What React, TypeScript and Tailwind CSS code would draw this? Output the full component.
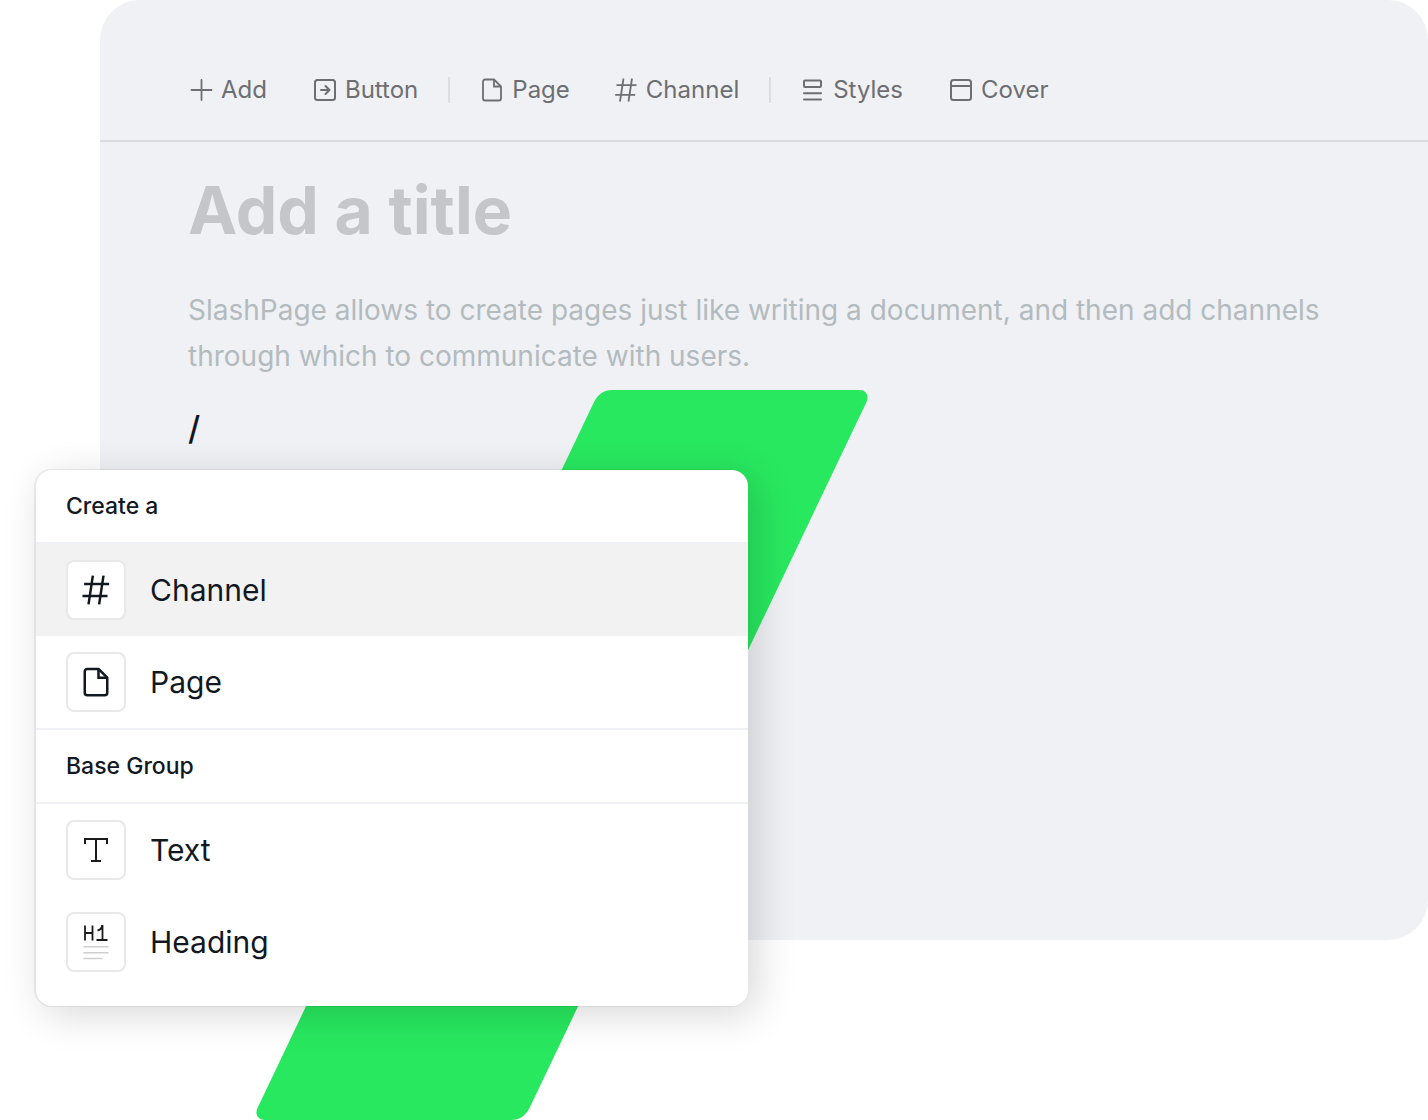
import type { ReactNode } from "react";

function PlusIcon() {
  return (
    <svg width="24" height="24" viewBox="0 0 24 24" fill="none" stroke="currentColor" strokeWidth="1.8" strokeLinecap="round">
      <path d="M12.5 2v20M2.5 12h20" />
    </svg>
  );
}

function ButtonIcon() {
  return (
    <svg width="24" height="24" viewBox="0 0 24 24" fill="none" stroke="currentColor" strokeWidth="2" strokeLinecap="round" strokeLinejoin="round">
      <rect x="2" y="2" width="20" height="20" rx="2.5" />
      <path d="M8 12h8M12.500 8l4 4-4 4" />
    </svg>
  );
}

function PageIcon({ size, strokeWidth }: { size: number; strokeWidth: number }) {
  return (
    <svg width={size} height={size} viewBox="0 0 24 24" fill="none" stroke="currentColor" strokeWidth={strokeWidth} strokeLinejoin="round">
      <path d="M14 1.500H5A2 2 0 0 0 3 3.500v17a2 2 0 0 0 2 2h14a2 2 0 0 0 2-2V8.500z" />
      <path d="M14 1.500v7h7" strokeLinejoin="miter" />
    </svg>
  );
}

function HashIcon({ size, strokeWidth }: { size: number; strokeWidth: number }) {
  return (
    <svg width={size} height={size} viewBox="0 0 24 24" fill="none" stroke="currentColor" strokeWidth={strokeWidth}>
      <path d="M2.500 7.200h20M1.200 16.800h20M9.500.500 6 23.500M18 .500l-3.500 23" />
    </svg>
  );
}

function StylesIcon() {
  return (
    <svg width="24" height="24" viewBox="0 0 24 24" fill="none" stroke="currentColor" strokeWidth="2" strokeLinecap="round">
      <rect x="3" y="2.500" width="17" height="6.500" rx="1" />
      <path d="M3 15.200h17M3 21.500h17" />
    </svg>
  );
}

function CoverIcon() {
  return (
    <svg width="24" height="24" viewBox="0 0 24 24" fill="none" stroke="currentColor" strokeWidth="2">
      <rect x="2" y="2" width="20" height="20" rx="2.500" />
      <path d="M2 8h20" />
    </svg>
  );
}

function TextIcon() {
  return (
    <svg width="28" height="28" viewBox="0 0 28 28" fill="none" stroke="#1a1a1a" strokeWidth="2">
      <path d="M3 8V3h22v5M14 3v22M9 25h10" />
    </svg>
  );
}

function HeadingIcon() {
  return (
    <svg width="28" height="36" viewBox="0 0 28 36" fill="none">
      <path d="M3 1.500v15M10.500 1.500v15M3 9h7.500M14.500 16h11M20.500 16V2h-.5c-.5 2.500-2 4-4.500 4.500" stroke="#1a1a1a" strokeWidth="1.800" />
      <path d="M2 22.800h24M2 28.700h24M2 34.500h18" stroke="#cfcfcf" strokeWidth="1.400" strokeLinecap="round" />
    </svg>
  );
}

function ToolButton({ icon, children }: { icon: ReactNode; children: ReactNode }) {
  return (
    <button type="button" className="flex items-center gap-2 text-2xl leading-8 text-[#6d6e72]">
      {icon}
      {children}
    </button>
  );
}

function Divider() {
  return <div className="mx-[30px] h-[26px] w-[2px] bg-[#dddee2]" />;
}

function MenuHeader({ children }: { children: ReactNode }) {
  return (
    <h2 className="border-b-2 border-[#f0f1f5] px-[30px] py-5 text-[23px] leading-8 font-medium">
      {children}
    </h2>
  );
}

function MenuItem({
  icon,
  active = false,
  children,
}: {
  icon: ReactNode;
  active?: boolean;
  children: ReactNode;
}) {
  return (
    <button
      type="button"
      className={`flex w-full items-center gap-6 px-[30px] py-4 text-left text-3xl leading-10 ${active ? "bg-[#f2f2f2]" : "bg-white"}`}
    >
      <span className="flex size-[60px] items-center justify-center rounded-lg border-2 border-[#e9e9e9] bg-white">
        {icon}
      </span>
      {children}
    </button>
  );
}

// Green slash that sits between the editor and the menu
function Slash() {
  return (
    <svg className="absolute top-[390px] left-[256px]" width="612" height="730" viewBox="0 0 612 730" aria-hidden="true">
      <path
        fill="#28e85f"
        d="M356 0H603C610 0 613.500 5.500 610.500 12L274 717C270 725.500 264 730 255 730H9C2 730-1.500 724.500 1.500 718L338 12C342 4 348 0 356 0Z"
      />
    </svg>
  );
}

export default function App() {
  return (
    <div className="relative bg-white pb-[180px] font-[Inter,sans-serif] text-[#12181f]">
      <main className="ml-[100px] min-h-[940px] rounded-[40px] bg-[#f0f1f5]">
        <div className="flex items-center border-b-2 border-[#dadbdf] pt-[74px] pb-[34px] pl-[89px]">
          <div className="flex gap-[46px]">
            <ToolButton icon={<PlusIcon />}>Add</ToolButton>
            <ToolButton icon={<ButtonIcon />}>Button</ToolButton>
          </div>
          <Divider />
          <div className="flex gap-11">
            <ToolButton icon={<PageIcon size={24} strokeWidth={1.8} />}>Page</ToolButton>
            <ToolButton icon={<HashIcon size={24} strokeWidth={1.8} />}>Channel</ToolButton>
          </div>
          <Divider />
          <div className="flex gap-[46px]">
            <ToolButton icon={<StylesIcon />}>Styles</ToolButton>
            <ToolButton icon={<CoverIcon />}>Cover</ToolButton>
          </div>
        </div>

        <div className="px-[88px] pt-7">
          <input
            type="text"
            aria-label="Title"
            placeholder="Add a title"
            className="block w-full text-[66px] leading-20 font-bold outline-none placeholder:text-[#c5c6ca]"
          />
          <p className="mt-[37px] text-[28px] leading-[46px] text-[#b3bbbe]">
            SlashPage allows to create pages just like writing a document, and then add channels
            through which to communicate with users.
          </p>
          <input
            type="text"
            aria-label="Command"
            defaultValue="/"
            className="mt-[25px] block w-full text-[33px] leading-[48px] font-medium outline-none"
          />
        </div>
      </main>

      <Slash />

      <div className="absolute top-[470px] left-9 w-[712px] overflow-hidden rounded-2xl bg-white pb-[18px] shadow-[-1px_0_0_1px_rgba(0,0,0,0.06),8px_8px_40px_rgba(0,0,0,0.16)]">
        <section className="border-b-2 border-[#f0f1f5]">
          <MenuHeader>Create a</MenuHeader>
          <MenuItem active icon={<HashIcon size={30} strokeWidth={2} />}>
            Channel
          </MenuItem>
          <MenuItem icon={<PageIcon size={30} strokeWidth={2} />}>Page</MenuItem>
        </section>
        <section>
          <MenuHeader>Base Group</MenuHeader>
          <MenuItem icon={<TextIcon />}>Text</MenuItem>
          <MenuItem icon={<HeadingIcon />}>Heading</MenuItem>
        </section>
      </div>
    </div>
  );
}
